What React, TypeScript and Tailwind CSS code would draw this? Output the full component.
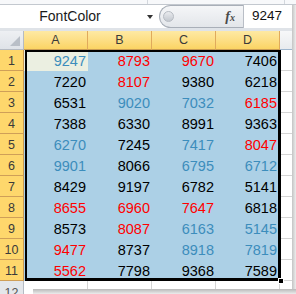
type Tone = 'k' | 'r' | 'b'

const cols = ['A', 'B', 'C', 'D']

const data: [number, Tone][][] = [
  [[9247, 'b'], [8793, 'r'], [9670, 'r'], [7406, 'k']],
  [[7220, 'k'], [8107, 'r'], [9380, 'k'], [6218, 'k']],
  [[6531, 'k'], [9020, 'b'], [7032, 'b'], [6185, 'r']],
  [[7388, 'k'], [6330, 'k'], [8991, 'k'], [9363, 'k']],
  [[6270, 'b'], [7245, 'k'], [7417, 'b'], [8047, 'r']],
  [[9901, 'b'], [8066, 'k'], [6795, 'b'], [6712, 'b']],
  [[8429, 'k'], [9197, 'k'], [6782, 'k'], [5141, 'k']],
  [[8655, 'r'], [6960, 'r'], [7647, 'r'], [6818, 'k']],
  [[8573, 'k'], [8087, 'r'], [6163, 'b'], [5145, 'b']],
  [[9477, 'r'], [8737, 'k'], [8918, 'b'], [7819, 'b']],
  [[5562, 'r'], [7798, 'k'], [9368, 'k'], [7589, 'k']],
]

const toneClass: Record<Tone, string> = {
  k: 'text-black',
  r: 'text-[#ff0000]',
  b: 'text-[#3c8dbc]',
}

export default function App() {
  return (
    <div
      className="relative h-[294px] w-[296px] overflow-hidden bg-white"
      style={{ fontFamily: '"Liberation Sans", Arial, sans-serif' }}
    >
      {/* ribbon edge */}
      <div className="flex h-[5px] border-b border-[#c3c8cf] bg-[#f7f8fa]">
        <div className="w-[148px] border-r border-[#d3d7dd]" />
        <div className="w-[137px] border-r border-[#d3d7dd]" />
      </div>

      {/* formula bar */}
      <div className="flex h-[23px] bg-white">
        <div className="flex w-[159px] items-center">
          <span className="w-[140px] text-center text-[14px] text-[#1a1a1a]">FontColor</span>
          <span className="ml-[7px] h-0 w-0 border-x-[3.5px] border-t-[4px] border-x-transparent border-t-[#333]" />
        </div>
        <div className="flex w-[84px] items-center rounded-l-[12px] border border-r-0 border-[#a9afb8] bg-gradient-to-b from-[#f5f6f8] to-[#e3e6ea] pl-[3px]">
          <span className="h-[11px] w-[11px] rounded-full border border-[#b6bbc2] bg-gradient-to-b from-[#e9ebee] to-[#c3c8cf]" />
          <span
            className="ml-auto pr-[8px] text-[14px] font-bold italic text-[#4a4a4a]"
            style={{ fontFamily: '"Liberation Serif", serif' }}
          >
            f<span className="text-[10px]">x</span>
          </span>
        </div>
        <div className="flex flex-1 items-center border-l border-[#b9bec6] pl-[8px] text-[13.5px] text-[#111]">
          9247
        </div>
      </div>
      <div className="h-[3px] bg-[#dfe3e8]" />

      {/* column headers */}
      <div className="flex h-[19px] text-[12.5px] text-[#3a3a3a]">
        <div className="flex w-[24px] items-end justify-end border-r border-b border-[#b5bbc3] bg-gradient-to-b from-[#eef0f3] to-[#dfe3e8] p-[3px]">
          <svg width="10" height="10" viewBox="0 0 10 10">
            <polygon points="10,0 10,10 0,10" fill="#b9bfc7" />
          </svg>
        </div>
        {cols.map((c) => (
          <div
            key={c}
            className="flex w-[64px] items-center justify-center border-r border-b border-r-[#e0aa5c] border-b-[#c89c54] bg-gradient-to-b from-[#fee9a3] to-[#fbd463] leading-none"
          >
            {c}
          </div>
        ))}
        <div className="flex-1 border-b border-[#9eb6ce] bg-gradient-to-b from-[#f7f8f9] to-[#e8ebee]" />
      </div>

      {/* body */}
      <div className="flex">
        <div className="w-[24px]">
          {data.map((_, i) => (
            <div
              key={i}
              className="h-[21px] border-r border-b border-r-[#c9974e] border-b-[#cf9f58] bg-[#fed76c] pt-px text-center text-[12.5px] leading-[21px] text-[#3a3a3a]"
            >
              {i + 1}
            </div>
          ))}
          <div className="h-[13px] border-r border-[#b5bbc3] bg-[#e4e7eb] pt-[2px] text-center text-[12.5px] leading-[21px] text-[#555]">
            12
          </div>
        </div>

        <div className="w-[256px]">
          <div className="bg-[#acd0e6]">
            {data.map((row, i) => (
              <div key={i} className="grid h-[21px] grid-cols-4">
                {row.map(([v, t], j) => (
                  <div
                    key={j}
                    className={`h-[21px] text-right text-[14.5px] leading-[23px] ${toneClass[t]} ${
                      j === 3 ? 'pr-[3px]' : 'pr-[2px]'
                    } ${i === 0 && j === 0 ? 'bg-[#ebefe1]' : ''}`}
                  >
                    {v}
                  </div>
                ))}
              </div>
            ))}
          </div>
          <div className="grid h-[13px] grid-cols-4">
            {cols.map((c) => (
              <div key={c} className="border-r border-[#d4d4d4]" />
            ))}
          </div>
        </div>

        <div className="flex-1">
          {data.map((_, i) => (
            <div key={i} className="h-[21px] border-b border-[#d4d4d4]" />
          ))}
        </div>
      </div>

      {/* selection border + fill handle */}
      <div className="pointer-events-none absolute left-[25px] top-[50px] h-[231px] w-[256px] border-t-2 border-l-2 border-r-[3px] border-b-[3px] border-black" />
      <div className="pointer-events-none absolute left-[278px] top-[278px] h-[6px] w-[6px] border border-white bg-black" />

      {/* window shadow */}
      <div className="pointer-events-none absolute right-0 top-[5px] h-[289px] w-[4px] bg-gradient-to-r from-[#c4c4c4] to-[#ededed]" />
      <div className="pointer-events-none absolute bottom-0 left-[33px] right-0 h-[5px] bg-gradient-to-b from-[#b9b9b9] to-[#ececec]" />
    </div>
  )
}
